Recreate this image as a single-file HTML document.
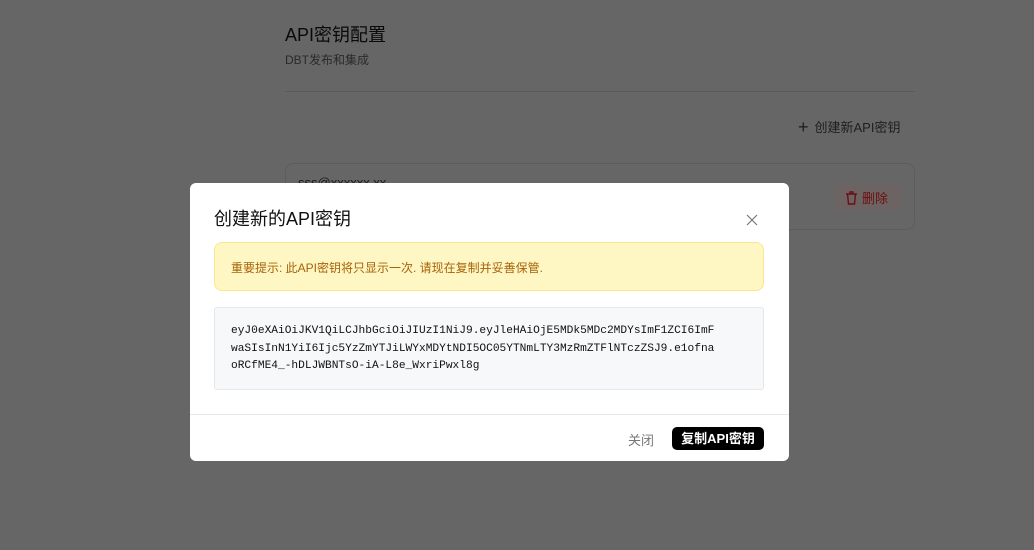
<!DOCTYPE html>
<html><head><meta charset="utf-8"><style>
*{margin:0;padding:0;box-sizing:border-box}
body{width:1034px;height:550px;background:#666;font-family:"Liberation Sans","Noto Sans CJK SC",sans-serif;position:relative;overflow:hidden}
.a{position:absolute}
</style></head><body>
<div class="a" style="left:285px;top:21px;font-size:18px;color:#0a0a0a">API密钥配置</div>
<div class="a" style="left:285px;top:51px;font-size:12px;color:#2a2a2a">DBT发布和集成</div>
<div class="a" style="left:285px;top:91px;width:630px;height:1px;background:#5a5a5a"></div>
<div class="a" style="left:798px;top:116px;font-size:13px;color:#1e1e1e"><span style="font-size:18px;position:relative;top:1px;margin-right:6px">+</span>创建新API密钥</div>
<div class="a" style="left:285px;top:163px;width:630px;height:67px;border:1px solid #5c5c5c;border-radius:8px"></div>
<div class="a" style="left:298px;top:175px;font-size:13px;color:#1a1a1a">sss@xxxxxx.xx</div>
<div class="a" style="left:835px;top:184px;width:67px;height:26px;background:#6e6363;border-radius:5px;font-size:13px;color:#6a1010;padding:4px 0 0 10px">
<svg width="13" height="14" viewBox="0 0 13 14" style="vertical-align:-2px;margin-right:4px"><path d="M1 3h11M5 3V1h3v2M2.5 3l1 10h6l1-10" stroke="#6a1010" stroke-width="1.4" fill="none"/></svg>删除</div>
<div class="a" style="left:190px;top:183px;width:599px;height:278px;background:#fff;border-radius:6px">
<div class="a" style="left:24px;top:22px;font-size:18px;color:#111">创建新的API密钥</div>
<svg class="a" style="left:556px;top:31px" width="12" height="12" viewBox="0 0 12 12"><path d="M1 1l10 10M11 1L1 11" stroke="#777" stroke-width="1.2"/></svg>
<div class="a" style="left:24px;top:59px;width:550px;height:49px;background:#fef7c3;border:1px solid #fde68a;border-radius:8px;font-size:12px;color:#a8620a;padding:16px 0 0 16px">重要提示: 此API密钥将只显示一次. 请现在复制并妥善保管.</div>
<div class="a" style="left:24px;top:124px;width:550px;height:83px;background:#f7f8fa;border:1px solid #e5e7eb;border-radius:3px;font-family:'Liberation Mono','DejaVu Sans Mono',monospace;font-size:11.2px;line-height:17.5px;color:#111;padding:15px 0 0 16px;white-space:pre">eyJ0eXAiOiJKV1QiLCJhbGciOiJIUzI1NiJ9.eyJleHAiOjE5MDk5MDc2MDYsImF1ZCI6ImF
waSIsInN1YiI6Ijc5YzZmYTJiLWYxMDYtNDI5OC05YTNmLTY3MzRmZTFlNTczZSJ9.e1ofna
oRCfME4_-hDLJWBNTsO-iA-L8e_WxriPwxl8g</div>
<div class="a" style="left:0;top:231px;width:599px;height:1px;background:#e8e8e8"></div>
<div class="a" style="left:438px;top:247px;font-size:13px;color:#777">关闭</div>
<div class="a" style="left:482px;top:244px;width:92px;height:23px;background:#000;border-radius:5px;color:#fff;font-size:13px;font-weight:bold;text-align:center;line-height:23px">复制API密钥</div>
</div>
</body></html>
